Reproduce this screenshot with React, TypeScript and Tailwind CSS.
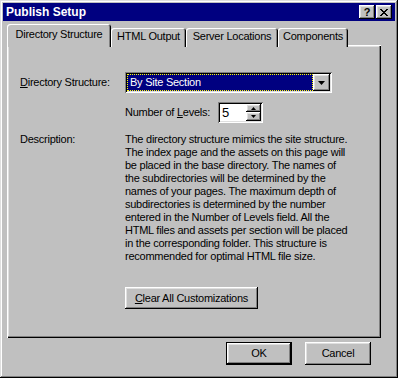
import React, { useState } from 'react';

// Win95 style bevels
const raised =
  'shadow-[inset_-1px_-1px_#000,inset_1px_1px_#fff,inset_-2px_-2px_#808080,inset_2px_2px_#dfdfdf]';
const sunken =
  'shadow-[inset_1px_1px_#808080,inset_-1px_-1px_#fff,inset_2px_2px_#000,inset_-2px_-2px_#dfdfdf]';

const tabs = [
  { label: 'Directory Structure', w: 'w-[104px]' },
  { label: 'HTML Output', w: 'w-[75px]' },
  { label: 'Server Locations', w: 'w-[92px]' },
  { label: 'Components', w: 'w-[70px]' },
];

const description = [
  'The directory structure mimics the site structure.',
  'The index page and the assets on this page will',
  'be placed in the base directory. The names of',
  'the subdirectories will be determined by the',
  'names of your pages. The maximum depth of',
  'subdirectories is determined by the number',
  'entered in the Number of Levels field.  All the',
  'HTML files and assets per section will be placed',
  'in the corresponding folder. This structure is',
  'recommended for optimal HTML file size.',
];

export default function App() {
  const [activeTab, setActiveTab] = useState(0);
  const [levels, setLevels] = useState(5);

  return (
    <div
      className="w-[398px] h-[378px] bg-[#c0c0c0] flex flex-col p-[3px] text-[11px] leading-[13px] text-black tracking-[-0.25px] shadow-[inset_-1px_-1px_#000,inset_1px_1px_#dfdfdf,inset_-2px_-2px_#808080,inset_2px_2px_#fff]"
      style={{ fontFamily: '"Liberation Sans", Arial, sans-serif' }}
    >
      {/* title bar */}
      <div className="h-[18px] bg-[#000080] flex items-center justify-between pl-[3px] pr-[3px]">
        <span className="text-white font-bold text-[12px] tracking-normal">Publish Setup</span>
        <div className="flex gap-[0px]">
          <div className={`w-[16px] h-[14px] bg-[#c0c0c0] ${raised} flex items-center justify-center font-bold text-[11px] leading-none`}>
            ?
          </div>
          <div className={`w-[16px] h-[14px] bg-[#c0c0c0] ${raised} flex items-center justify-center ml-[1px]`}>
            <svg width="8" height="7" viewBox="0 0 8 7">
              <path d="M0 0h2v1h1v1h2v-1h1v-1h2v1h-1v1h-1v1h-1v1h1v1h1v1h1v1h-2v-1h-1v-1h-2v1h-1v1h-2v-1h1v-1h1v-1h1v-1h-1v-1h-1v-1h-1z" fill="#000" />
            </svg>
          </div>
        </div>
      </div>

      {/* tabs */}
      <div className="mt-[3px] ml-[4px] mr-[14px] flex flex-col">
        <div className="relative z-10 flex items-end h-[23px]">
          {tabs.map((t, i) => (
            <button
              key={t.label}
              onClick={() => setActiveTab(i)}
              className={`${t.w} bg-[#c0c0c0] rounded-t-[3px] flex justify-center items-start shadow-[inset_1px_1px_#fff,inset_-1px_0_#000,inset_-2px_0_#808080] ${
                i === activeTab ? 'h-[23px] pt-[4px]' : 'h-[19px] pt-[2px]'
              }`}
            >
              {t.label}
            </button>
          ))}
        </div>
        <div className="-mt-[2px] h-[293px] bg-[#c0c0c0] shadow-[inset_1px_1px_#fff,inset_-1px_-1px_#000,inset_-2px_-2px_#808080,inset_2px_2px_#dfdfdf] pt-[27px] pl-[13px]">
          <div className="grid grid-cols-[105px_1fr] items-center">
            <span>
              <span className="underline">D</span>irectory Structure:
            </span>
            <div className={`w-[207px] h-[21px] bg-white ${sunken} p-[2px] flex`}>
              <div className="flex-1 bg-[#000080] text-white outline outline-1 outline-dotted outline-[#ffff00] -outline-offset-1 pl-[3px] flex items-center">
                By Site Section
              </div>
              <div className={`w-[17px] bg-[#c0c0c0] ${raised} flex items-center justify-center`}>
                <svg width="7" height="4" viewBox="0 0 7 4">
                  <path d="M0 0h7l-3.5 4z" fill="#000" />
                </svg>
              </div>
            </div>

            <div />
            <div className="flex items-center mt-[9px]">
              <span className="w-[93px]">
                Number of <span className="underline">L</span>evels:
              </span>
              <div className={`w-[45px] h-[21px] bg-white ${sunken} p-[2px] flex`}>
                <span className="flex-1 pl-[2px] text-[13px] leading-[17px] tracking-normal">{levels}</span>
                <div className="w-[15px] flex flex-col">
                  <button
                    onClick={() => setLevels(levels + 1)}
                    className={`h-[8px] bg-[#c0c0c0] ${raised} flex items-center justify-center`}
                  >
                    <svg width="5" height="3" viewBox="0 0 5 3">
                      <path d="M2.5 0L5 3H0z" fill="#000" />
                    </svg>
                  </button>
                  <button
                    onClick={() => setLevels(Math.max(1, levels - 1))}
                    className={`h-[9px] bg-[#c0c0c0] ${raised} flex items-center justify-center`}
                  >
                    <svg width="5" height="3" viewBox="0 0 5 3">
                      <path d="M0 0h5L2.5 3z" fill="#000" />
                    </svg>
                  </button>
                </div>
              </div>
            </div>

            <span className="self-start mt-[10px]">Description:</span>
            <p className="mt-[10px]">
              {description.map((line, i) => (
                <React.Fragment key={i}>
                  {line}
                  <br />
                </React.Fragment>
              ))}
            </p>

            <div />
            <div className="mt-[24px]">
              <button className={`w-[133px] h-[22px] bg-[#c0c0c0] ${raised}`}>
                <span className="underline">C</span>lear All Customizations
              </button>
            </div>
          </div>
        </div>
      </div>

      {/* dialog buttons */}
      <div className="flex justify-end gap-[13px] mt-[4px] pr-[24px]">
        <button className="w-[66px] h-[23px] bg-[#c0c0c0] border border-black shadow-[inset_-1px_-1px_#000,inset_1px_1px_#fff,inset_-2px_-2px_#808080,inset_2px_2px_#dfdfdf]">
          OK
        </button>
        <button className={`w-[66px] h-[23px] bg-[#c0c0c0] ${raised}`}>Cancel</button>
      </div>
    </div>
  );
}
